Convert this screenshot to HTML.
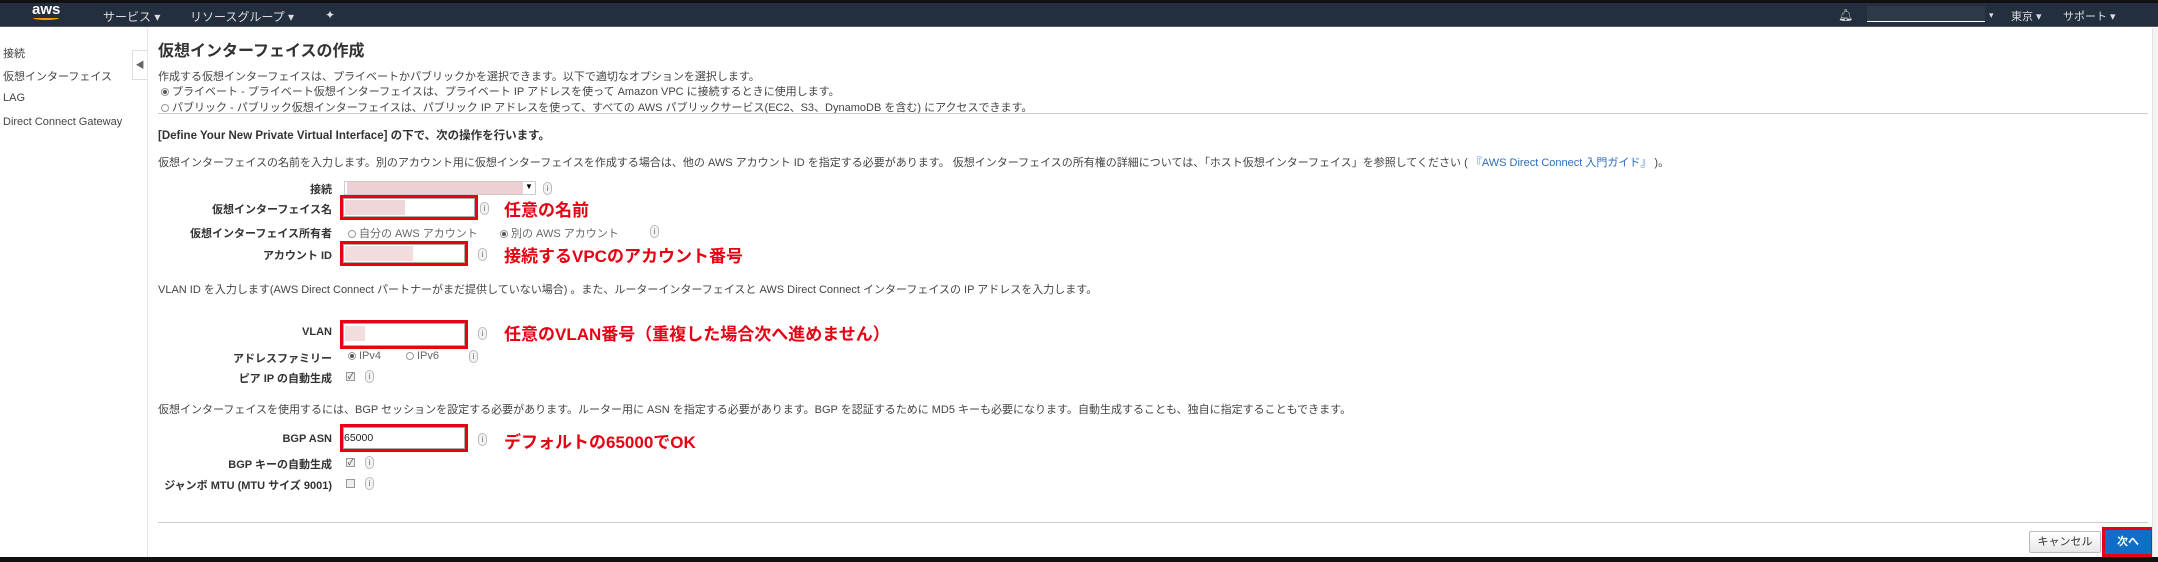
<!DOCTYPE html>
<html><head><meta charset="utf-8"><style>
*{margin:0;padding:0;box-sizing:border-box}
body{width:2158px;height:562px;overflow:hidden;background:#fff;font-family:"Liberation Sans","Noto Sans CJK JP",sans-serif;color:#444;font-size:11px;position:relative}
.a{position:absolute;white-space:nowrap}
.nav{position:absolute;left:0;top:0;width:2158px;height:27px;background:#232f3e;border-top:3px solid #111;border-bottom:1px solid #555}
.nt{position:absolute;color:#ddd;font-size:12px;top:5px}
.lbl{position:absolute;right:1826px;font-weight:bold;color:#333;font-size:11px;white-space:nowrap}
.red{position:absolute;border:3px solid #e60012}
.ann{position:absolute;color:#e60012;font-size:17px;font-weight:bold;white-space:nowrap}
.info{position:absolute;width:9px;height:13px;border:1px solid #bbb;border-radius:5px;background:#f3f3f3;font-size:8px;text-align:center;line-height:11px;color:#666}
.inp{position:absolute;background:#fff;border:1px solid #aaa}
.blur{position:absolute;background:#e8c4c8}
.rad{display:inline-block;width:8px;height:8px;border:1px solid #999;border-radius:50%;vertical-align:middle;margin-right:3px;position:relative}
.rad.on:after{content:"";position:absolute;left:1px;top:1px;width:4px;height:4px;border-radius:50%;background:#555}
.chk{position:absolute;width:9px;height:9px;border:1px solid #999;background:#eee;font-size:8px;line-height:8px;text-align:center;color:#333}
</style></head><body>
<div class="nav">
 <div class="a" style="left:32px;top:-2px;color:#fff;font-size:15px;font-weight:bold">aws</div>
 <div class="a" style="left:33px;top:13px;width:26px;height:4px;border-bottom:2px solid #f90;border-radius:0 0 50% 50%"></div>
 <div class="nt" style="left:103px">サービス ▾</div>
 <div class="nt" style="left:190px">リソースグループ ▾</div>
 <div class="nt" style="left:325px">✦</div>
 <div class="nt" style="left:1838px">🔔︎</div>
 <div class="a" style="left:1867px;top:3px;width:118px;height:16px;background:#2e3947;border-bottom:1px solid #fff"></div>
 <div class="nt" style="left:1989px;font-size:9px;top:7px">▾</div>
 <div class="nt" style="left:2011px;font-size:11px">東京 ▾</div>
 <div class="nt" style="left:2063px;font-size:11px">サポート ▾</div>
</div>
<div class="a" style="left:147px;top:28px;width:1px;height:529px;background:#e4e4e4"></div>
<div class="a" style="left:132px;top:50px;width:15px;height:30px;border:1px solid #ddd;border-right:none;background:#fff;font-size:9px;line-height:28px;text-align:center;color:#666">◀</div>
<div class="a" style="left:3px;top:45px;font-size:11px">接続</div>
<div class="a" style="left:3px;top:68px;font-size:11px">仮想インターフェイス</div>
<div class="a" style="left:3px;top:92px;font-size:11px">LAG</div>
<div class="a" style="left:3px;top:116px;font-size:11px">Direct Connect Gateway</div>

<div class="a" style="left:158px;top:37px;font-size:16px;font-weight:bold;color:#333">仮想インターフェイスの作成</div>
<div class="a" style="left:158px;top:68px">作成する仮想インターフェイスは、プライベートかパブリックかを選択できます。以下で適切なオプションを選択します。</div>
<div class="a" style="left:161px;top:83px"><span class="rad on"></span>プライベート - プライベート仮想インターフェイスは、プライベート IP アドレスを使って Amazon VPC に接続するときに使用します。</div>
<div class="a" style="left:161px;top:99px"><span class="rad"></span>パブリック - パブリック仮想インターフェイスは、パブリック IP アドレスを使って、すべての AWS パブリックサービス(EC2、S3、DynamoDB を含む) にアクセスできます。</div>
<div class="a" style="left:158px;top:113px;width:1990px;height:1px;background:#ccc"></div>
<div class="a" style="left:158px;top:127px;font-weight:bold;color:#333;font-size:11.5px">[Define Your New Private Virtual Interface] の下で、次の操作を行います。</div>
<div class="a" style="left:158px;top:154px">仮想インターフェイスの名前を入力します。別のアカウント用に仮想インターフェイスを作成する場合は、他の AWS アカウント ID を指定する必要があります。 仮想インターフェイスの所有権の詳細については、「ホスト仮想インターフェイス」を参照してください ( <span style="color:#2a6ebb">『AWS Direct Connect 入門ガイド』</span> )。</div>

<div class="lbl" style="top:181px">接続</div>
<div class="inp" style="left:344px;top:181px;width:192px;height:14px;border-color:#ccc"></div>
<div class="blur" style="left:347px;top:182px;width:176px;height:12px;opacity:.8"></div>
<div class="a" style="left:525px;top:182px;font-size:8px;color:#000">▼</div>
<div class="info" style="left:543px;top:182px">i</div>

<div class="lbl" style="top:201px">仮想インターフェイス名</div>
<div class="red" style="left:340px;top:195px;width:138px;height:25px"></div>
<div class="inp" style="left:343px;top:198px;width:132px;height:19px"></div>
<div class="blur" style="left:345px;top:200px;width:60px;height:15px;opacity:.7"></div>
<div class="info" style="left:480px;top:202px">i</div>
<div class="ann" style="left:504px;top:196px">任意の名前</div>

<div class="lbl" style="top:225px">仮想インターフェイス所有者</div>
<div class="a" style="left:348px;top:225px;color:#666"><span class="rad"></span>自分の AWS アカウント</div>
<div class="a" style="left:500px;top:225px;color:#666"><span class="rad on"></span>別の AWS アカウント</div>
<div class="info" style="left:650px;top:225px">i</div>

<div class="lbl" style="top:247px">アカウント ID</div>
<div class="red" style="left:340px;top:241px;width:128px;height:25px"></div>
<div class="inp" style="left:343px;top:244px;width:122px;height:19px"></div>
<div class="blur" style="left:345px;top:246px;width:68px;height:15px;opacity:.6"></div>
<div class="info" style="left:478px;top:248px">i</div>
<div class="ann" style="left:504px;top:242px">接続するVPCのアカウント番号</div>

<div class="a" style="left:158px;top:281px">VLAN ID を入力します(AWS Direct Connect パートナーがまだ提供していない場合) 。また、ルーターインターフェイスと AWS Direct Connect インターフェイスの IP アドレスを入力します。</div>

<div class="lbl" style="top:326px">VLAN</div>
<div class="red" style="left:340px;top:320px;width:128px;height:29px"></div>
<div class="inp" style="left:343px;top:323px;width:122px;height:23px"></div>
<div class="blur" style="left:345px;top:326px;width:20px;height:15px;opacity:.6"></div>
<div class="info" style="left:478px;top:327px">i</div>
<div class="ann" style="left:504px;top:320px">任意のVLAN番号（重複した場合次へ進めません）</div>

<div class="lbl" style="top:350px">アドレスファミリー</div>
<div class="a" style="left:348px;top:350px;color:#666"><span class="rad on"></span>IPv4</div>
<div class="a" style="left:406px;top:350px;color:#666"><span class="rad"></span>IPv6</div>
<div class="info" style="left:469px;top:350px">i</div>

<div class="lbl" style="top:370px">ピア IP の自動生成</div>
<div class="chk" style="left:346px;top:372px">✓</div>
<div class="info" style="left:365px;top:370px">i</div>

<div class="a" style="left:158px;top:401px">仮想インターフェイスを使用するには、BGP セッションを設定する必要があります。ルーター用に ASN を指定する必要があります。BGP を認証するために MD5 キーも必要になります。自動生成することも、独自に指定することもできます。</div>

<div class="lbl" style="top:433px">BGP ASN</div>
<div class="red" style="left:340px;top:424px;width:128px;height:28px"></div>
<div class="inp" style="left:343px;top:427px;width:122px;height:22px"></div>
<div class="a" style="left:344px;top:432px;color:#222;font-size:10.5px">65000</div>
<div class="info" style="left:478px;top:433px">i</div>
<div class="ann" style="left:504px;top:428px">デフォルトの65000でOK</div>

<div class="lbl" style="top:456px">BGP キーの自動生成</div>
<div class="chk" style="left:346px;top:458px">✓</div>
<div class="info" style="left:365px;top:456px">i</div>
<div class="lbl" style="top:477px">ジャンボ MTU (MTU サイズ 9001)</div>
<div class="chk" style="left:346px;top:479px"></div>
<div class="info" style="left:365px;top:477px">i</div>

<div class="a" style="left:158px;top:522px;width:1990px;height:1px;background:#ccc"></div>
<div class="a" style="left:2029px;top:531px;width:72px;height:22px;border:1px solid #bbb;border-radius:2px;background:linear-gradient(#fff,#e8e8e8);text-align:center;line-height:20px;color:#333">キャンセル</div>
<div class="a" style="left:2102px;top:527px;width:52px;height:30px;border:3px solid #e60012"></div>
<div class="a" style="left:2105px;top:530px;width:46px;height:24px;background:#0f6fc6;color:#fff;text-align:center;line-height:24px;font-weight:bold">次へ</div>
<div class="a" style="left:2152px;top:28px;width:6px;height:529px;background:#f4f4f4;border-left:1px solid #e0e0e0"></div>
<div class="a" style="left:0;top:557px;width:2158px;height:5px;background:#111"></div>
</body></html>
